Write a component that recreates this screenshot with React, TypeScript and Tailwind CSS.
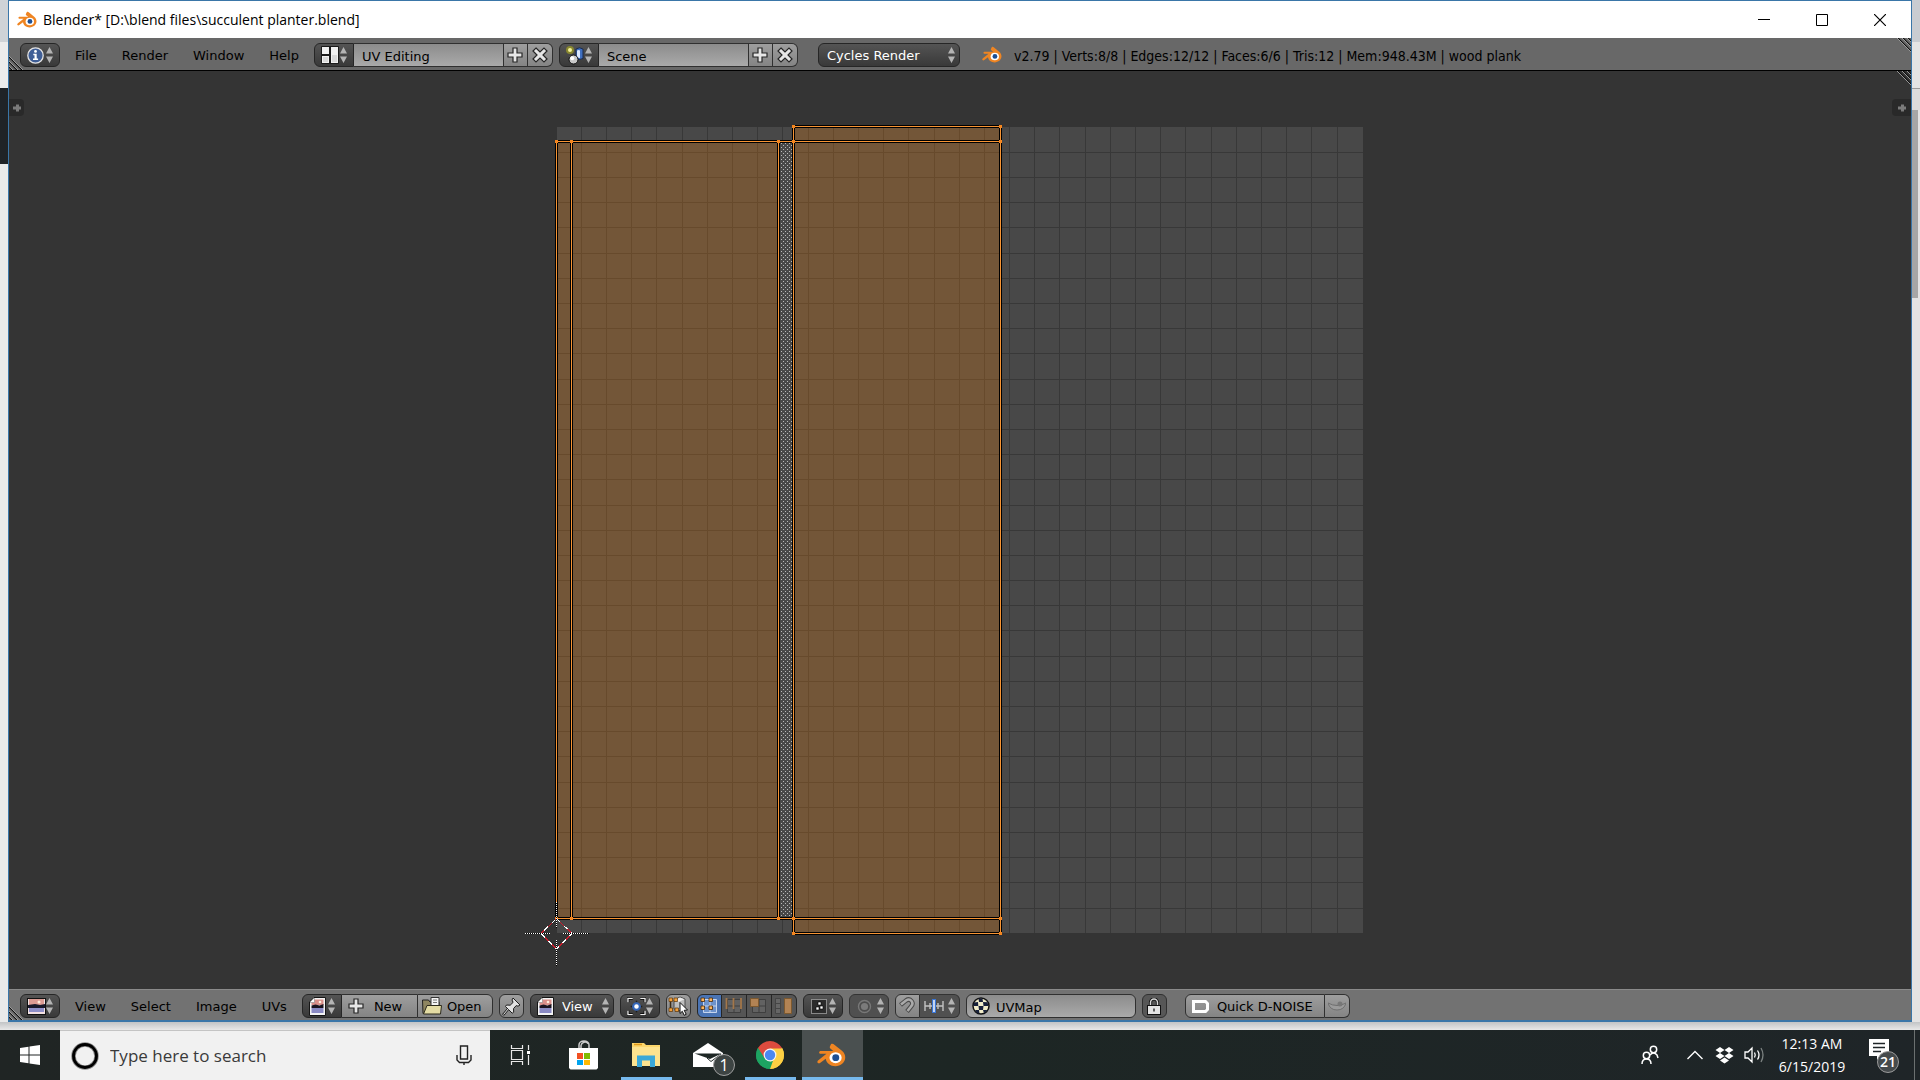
import type { ReactNode } from "react";
import clsx from "clsx";

const DARK = "border-[#262626] bg-linear-to-b from-[#545454] to-[#393939] text-white";
const LIGHT = "border-[#303030] bg-linear-to-b from-[#9e9e9e] to-[#848484] text-black";
const FIELD = "border-[#303030] bg-linear-to-b from-[#8c8c8c] to-[#aaaaaa] text-black";

function Arrows() {
  return (
    <svg width="7" height="16" viewBox="0 0 7 16" className="shrink-0" aria-hidden="true">
      <path d="M3.5 0 L7 6.5 H0 Z M3.5 16 L0 9.5 H7 Z" fill="#b4b4b4" />
    </svg>
  );
}

function BlenderLogo({ size }: { size: number }) {
  return (
    <svg width={size} height={size} viewBox="0 0 30 26" aria-hidden="true">
      <path
        d="M14.6 1.2c.9-.8 2.2-.4 3 .3l8.2 6.7c2.4 2 3.5 4.500 3.400 7.200-.2 5-4.700 8.700-10.200 8.700-5.200 0-9.400-3.300-10-7.700L3.500 20.500c-1 .8-2.300.7-2.800 0-.7-.9-.2-2 .7-2.700l8.400-6.500H4c-1.100 0-1.800-.6-1.800-1.500s.8-1.500 1.900-1.500h12.700l-3-2.600c-1-.9-.7-1.800.8-4.500z"
        fill="#ef8522"
      />
      <ellipse cx="19.200" cy="15.300" rx="6.300" ry="5.700" fill="#fff" />
      <circle cx="19.400" cy="15.200" r="3.600" fill="#1d4f93" />
    </svg>
  );
}

function InfoIcon() {
  return (
    <svg width="17" height="17" viewBox="0 0 17 17" aria-hidden="true">
      <circle cx="8.500" cy="8.500" r="7.700" fill="#3f5e96" stroke="#e4e4e4" strokeWidth="1.300" />
      <circle cx="8.500" cy="4.400" r="1.400" fill="#fff" />
      <path d="M6.300 6.800h3.400v4.700h1.400v1.500H6v-1.500h1.500V8.300H6.300z" fill="#fff" />
    </svg>
  );
}

function LayoutIcon() {
  return (
    <svg width="18" height="18" viewBox="0 0 18 18" aria-hidden="true">
      <rect x="0" y="0" width="18" height="18" rx="1" fill="#1c1c1c" />
      <path d="M1 1h7v7H1z M1 10h7v7H1z M10 1h7v16h-7z" fill="#f2f2f2" />
      <path d="M2 11h5v5H2z M11 9h5v7h-5z" fill="#dadada" />
    </svg>
  );
}

function SceneIcon() {
  return (
    <svg width="19" height="19" viewBox="0 0 19 19" aria-hidden="true">
      <circle cx="4" cy="4" r="4" fill="#87862f" />
      <circle cx="4" cy="4" r="2" fill="#f6f49c" />
      <path d="M10 3q3.500-2.500 7 0v9.500q-3.500 2-7 0z" fill="#3f6fc0" stroke="#1b2a4a" />
      <path d="M11 4.500q2-1.200 3 0v7.500l-3-.5z" fill="#dbe8ff" />
      <circle cx="7.500" cy="13.500" r="4.500" fill="#c9c9c9" stroke="#111" />
      <circle cx="6.200" cy="12.200" r="2" fill="#fff" />
    </svg>
  );
}

function PlusIcon() {
  return (
    <svg width="16" height="16" viewBox="0 0 16 16" className="shrink-0" aria-hidden="true">
      <path d="M6 1h4v5h5v4h-5v5H6v-5H1V6h5z" fill="#e6e6e6" stroke="#262626" strokeWidth="1.200" />
    </svg>
  );
}

function CrossIcon() {
  return (
    <svg width="16" height="16" viewBox="0 0 16 16" className="shrink-0" aria-hidden="true">
      <path
        d="M4 1 L8 5 L12 1 L15 4 L11 8 L15 12 L12 15 L8 11 L4 15 L1 12 L5 8 L1 4 Z"
        fill="#e6e6e6"
        stroke="#262626"
        strokeWidth="1.200"
      />
    </svg>
  );
}

function PictureIcon() {
  return (
    <svg width="19" height="17" viewBox="0 0 19 17" aria-hidden="true">
      <rect width="19" height="17" fill="#111" />
      <rect x="1" y="1" width="17" height="15" fill="#f0e2e2" />
      <rect x="2" y="1" width="15" height="6" fill="#dd9c94" />
      <circle cx="12" cy="4" r="1.500" fill="#ffe9d8" />
      <path d="M1 7l7-1 5 1 5-1v4H1z" fill="#191a2c" />
      <rect x="2" y="10" width="15" height="4" fill="#8f8fc8" />
      <path d="M2 14.500h15" stroke="#f6dfe0" />
    </svg>
  );
}

function ImageFileIcon() {
  return (
    <svg width="17" height="19" viewBox="0 0 17 19" aria-hidden="true">
      <path d="M5 .5h11.500v18H.5V5z" fill="#f4f4f4" stroke="#161616" />
      <path d="M5.500 2.500h9V8h-12V5.500z" fill="#d98f8a" />
      <circle cx="11" cy="5" r="1.300" fill="#ffeede" />
      <path d="M2.500 8.500l4-1 4 1 4-1.500v4h-12z" fill="#1a1420" />
      <path d="M2.500 11h12v5h-12z" fill="#8a8ac4" />
      <path d="M1 5.500h4.500V1" fill="#fff" stroke="#888" strokeWidth=".6" />
    </svg>
  );
}

function FolderIcon() {
  return (
    <svg width="20" height="18" viewBox="0 0 20 18" className="shrink-0" aria-hidden="true">
      <path d="M.5 3h6l1.500 2h9v11.500H1z" fill="#8f8660" stroke="#222" />
      <path d="M9 .5h8v10H9z" fill="#f5f5f5" stroke="#333" />
      <path d="M11 3h4M11 5.500h4" stroke="#777" />
      <path d="M5 8.500h14.500l-1 8.500H1.500z" fill="#e4dca4" stroke="#2c2a1c" />
    </svg>
  );
}

function PinIcon() {
  return (
    <svg width="19" height="19" viewBox="0 0 19 19" aria-hidden="true">
      <path d="M1 18l6-7" stroke="#1d1d1d" strokeWidth="2.500" />
      <path
        d="M11 1l7 7-2 1.200-1.800-.6-2.700 3 .2 3.600-1.500 1L3.500 9.500l1-1.500 3.700.2 2.900-2.800L10 3z"
        fill="#e2e2e2"
        stroke="#1d1d1d"
      />
      <path d="M1.500 17.500l5-6" stroke="#f2f2f2" />
    </svg>
  );
}

function PivotIcon() {
  return (
    <svg width="20" height="19" viewBox="0 0 20 19" aria-hidden="true">
      <path d="M1 5V1h5M14 1h5v4M19 14v4h-5M6 18H1v-4" fill="none" stroke="#000" strokeWidth="3" />
      <path d="M1 5V1h5M14 1h5v4M19 14v4h-5M6 18H1v-4" fill="none" stroke="#eee" strokeWidth="1.400" />
      <circle cx="10" cy="9.500" r="3.500" fill="#fff" stroke="#3265b8" strokeWidth="2.200" />
      <path d="M10 3.500v1M10 14.500v1M4 9.500h1M15 9.500h1" stroke="#111" strokeWidth="1.500" />
    </svg>
  );
}

function SyncIcon() {
  return (
    <svg width="21" height="20" viewBox="0 0 21 20" aria-hidden="true">
      <path d="M2.500 3.500v10" fill="none" stroke="#3b2b18" strokeWidth="1.500" />
      <path d="M6 4l6-3 5 2v9l-6 3-5-2z" fill="#bdbdbd" stroke="#4a4a4a" />
      <path d="M6.500 4l4.500 1.800 5.500-2.600L12 1.500z" fill="#ececec" />
      <path
        d="M1 2h3.500v3.500H1zM6 2h3.500v3.500H6zM1 12h3.500v3.500H1zM7 12h3.500v3.500H7z"
        fill="#f2a13c"
        stroke="#5b3309"
        strokeWidth=".7"
      />
      <path d="M12 6.500l7.500 7.500-3.300.3 2 4-2 1-1.900-4L12 17.500z" fill="#fff" stroke="#111" />
    </svg>
  );
}

function UvModeIcon({ mode }: { mode: string }) {
  const active = mode === "Vertex";
  return (
    <svg width="19" height="18" viewBox="0 0 19 18" aria-hidden="true">
      {mode !== "Island" && (
        <g stroke={active ? "#c6d5ee" : "#3f3f3f"} fill={active ? "#6d93cc" : "#626262"}>
          <path d="M3.500 2.500h13v13h-13z" />
          <path d="M10 2.500v13M3.500 9h13" />
        </g>
      )}
      {active && (
        <path
          d="M1 1h3.500v3.500H1zM9 1h3.500v3.500H9zM1 9h3.500v3.500H1zM9 9h3.500v3.500H9z"
          fill="#ffb75e"
          stroke="#4a2a08"
          strokeWidth=".8"
        />
      )}
      {mode === "Edge" && <path d="M2.500 1v11M9.500 1v11M17 1v11" stroke="#a3774a" strokeWidth="1.800" />}
      {mode === "Face" && <path d="M1.500 1.500h8v8h-8z" fill="#b28354" stroke="#7d592f" />}
      {mode === "Island" && (
        <>
          <path d="M1.500 1.500h5v15h-5zM1.500 6.500h5M1.500 11.500h5" fill="#666" stroke="#454545" />
          <path d="M10.500 1.500h7v15h-7z" fill="#b28354" stroke="#7d592f" />
        </>
      )}
    </svg>
  );
}

function StickyIcon() {
  return (
    <svg width="18" height="17" viewBox="0 0 18 17" aria-hidden="true">
      <rect x="1.500" y="1.500" width="15" height="14" fill="#2b2b2b" stroke="#ddd" strokeDasharray="1 1" />
      <path d="M8 4h3v3H8zM6 9h3v3H6zM10 8h3v3h-3z" fill="#fff" stroke="#000" strokeWidth=".6" />
    </svg>
  );
}

function ProportionalIcon() {
  return (
    <svg width="15" height="15" viewBox="0 0 15 15" aria-hidden="true">
      <circle cx="7.500" cy="7.500" r="6" fill="#4d4d4d" stroke="#787878" strokeWidth="1.400" />
      <circle cx="7.500" cy="7.500" r="3.600" fill="#7b7b7b" />
    </svg>
  );
}

function MagnetIcon() {
  return (
    <svg width="18" height="18" viewBox="0 0 18 18" aria-hidden="true">
      <path d="M2.500 8l5.500-4.500c4.500-3 8.500 2.500 5 6L9 14.500" fill="none" stroke="#4a4a4a" strokeWidth="4.600" />
      <path d="M3 7.600l5-4.100c4.500-3 8.500 2.500 5 6L9.500 14" fill="none" stroke="#a9a9a9" strokeWidth="2.600" />
    </svg>
  );
}

function IncrementIcon() {
  return (
    <svg width="20" height="14" viewBox="0 0 20 14" aria-hidden="true">
      <path d="M1 2v10M6 4v6M14 4v6M19 2v10M1 7h18" stroke="#c2c2c2" strokeWidth="1.400" />
      <path d="M10 0v14" stroke="#3a76d6" strokeWidth="4" />
      <path d="M10 1v12" stroke="#fff" strokeWidth="1.400" />
    </svg>
  );
}

function CheckerBallIcon() {
  return (
    <svg width="18" height="18" viewBox="0 0 18 18" className="shrink-0" aria-hidden="true">
      <circle cx="9" cy="9" r="8" fill="#f1ecc9" stroke="#111" strokeWidth="1.500" />
      <path
        d="M6.500 1.500h4L11 5H7zM2 5.500l4-.5.300 4H1.500zM11 5l4.500.3L16.500 9H11.500zM6.500 9h5l-.5 4H7zM3 13l4 0 .5 3.500L5 16zM11 13h4.500L12 16.500z"
        fill="#17203a"
      />
    </svg>
  );
}

function LockIcon() {
  return (
    <svg width="14" height="17" viewBox="0 0 14 17" aria-hidden="true">
      <path d="M3.500 8V4.500a3.500 3.500 0 0 1 7 0V8" fill="none" stroke="#111" strokeWidth="3.200" />
      <path d="M3.500 8V4.500a3.500 3.500 0 0 1 7 0V8" fill="none" stroke="#d8d8d8" strokeWidth="1.500" />
      <rect x=".5" y="7.500" width="13" height="9" fill="#e4e4e4" stroke="#111" />
      <path d="M7 10.500v3" stroke="#333" strokeWidth="1.500" />
    </svg>
  );
}

function CornerGrip({ className, flip }: { className: string; flip?: boolean }) {
  return (
    <svg width="14" height="14" viewBox="0 0 14 14" className={clsx("absolute", className)} aria-hidden="true">
      <g transform={flip ? "rotate(180 7 7)" : undefined}>
        <path d="M1 0l13 13M6 0l8 8M11 0l3 3" stroke="#111" strokeWidth="1.200" />
        <path d="M0 0l14 14M5 0l9 9M10 0l4 4" stroke="#a5a5a5" strokeWidth=".9" />
      </g>
    </svg>
  );
}

function IconMenu({ label, children, className }: { label: string; children: ReactNode; className?: string }) {
  return (
    <button
      type="button"
      aria-label={label}
      aria-haspopup="menu"
      className={clsx("flex h-6 w-10 items-center justify-between border px-1.5", DARK, className ?? "rounded-md")}
    >
      {children}
      <Arrows />
    </button>
  );
}

function IconButton({ label, className, children }: { label: string; className: string; children: ReactNode }) {
  return (
    <button
      type="button"
      aria-label={label}
      className={clsx("flex h-6 w-[25px] items-center justify-center border", className)}
    >
      {children}
    </button>
  );
}

function Menus({ items }: { items: string[] }) {
  return (
    <nav className="mx-[3px] flex gap-px">
      {items.map((item) => (
        <button key={item} type="button" className="h-6 px-3 pt-0.5 text-black">
          {item}
        </button>
      ))}
    </nav>
  );
}

function DataBlock({ label, value, icon }: { label: string; value: string; icon: ReactNode }) {
  return (
    <div className="flex">
      <IconMenu label={`Browse ${label}`} className="rounded-l-md">
        {icon}
      </IconMenu>
      <input
        aria-label={label}
        defaultValue={value}
        className={clsx("h-6 w-[149px] border-y px-2 pt-0.5 outline-none", FIELD)}
      />
      <IconButton label={`Add ${label}`} className={clsx(LIGHT)}>
        <PlusIcon />
      </IconButton>
      <IconButton label={`Remove ${label}`} className={clsx("rounded-r-md border-l-0", LIGHT)}>
        <CrossIcon />
      </IconButton>
    </div>
  );
}

function DropDown({
  label,
  options,
  className,
  icon,
}: {
  label: string;
  options: string[];
  className: string;
  icon?: ReactNode;
}) {
  return (
    <div className={clsx("relative flex h-6 items-center rounded-md border", DARK, className)}>
      {icon}
      <select aria-label={label} className="h-full flex-1 appearance-none bg-transparent pt-0.5 pl-2 outline-none">
        {options.map((o) => (
          <option key={o}>{o}</option>
        ))}
      </select>
      <span className="pointer-events-none absolute right-1">
        <Arrows />
      </span>
    </div>
  );
}

function TitleBar() {
  return (
    <div className="flex h-[37px] items-center bg-white pl-2">
      <BlenderLogo size={20} />
      <h1 className="ml-1.5 flex-1 font-['Open_Sans','Noto_Sans',sans-serif] text-[14px] text-black">
        Blender* [D:\blend files\succulent planter.blend]
      </h1>
      <div className="flex pr-0.5">
        <button type="button" aria-label="Minimize" className="flex h-9 w-[58px] items-center justify-center">
          <svg width="12" height="12" viewBox="0 0 12 12">
            <path d="M0 5.500h12" stroke="#000" />
          </svg>
        </button>
        <button type="button" aria-label="Maximize" className="flex h-9 w-[58px] items-center justify-center">
          <svg width="12" height="12" viewBox="0 0 12 12">
            <path d="M.5.5h11v11H.5z" fill="none" stroke="#000" />
          </svg>
        </button>
        <button type="button" aria-label="Close" className="flex h-9 w-[58px] items-center justify-center">
          <svg width="12" height="12" viewBox="0 0 12 12">
            <path d="M0 0l12 12M12 0L0 12" stroke="#000" strokeWidth="1.200" />
          </svg>
        </button>
      </div>
    </div>
  );
}

function InfoHeader() {
  return (
    <header className="relative flex h-[33px] items-center border-b border-black bg-[#686868] pt-0.5 pl-[11px]">
      <CornerGrip className="bottom-0 left-0" flip />
      <CornerGrip className="top-0 right-0" />
      <IconMenu label="Editor type">
        <InfoIcon />
      </IconMenu>
      <Menus items={["File", "Render", "Window", "Help"]} />
      <div className="flex items-center gap-1.5">
        <DataBlock label="Screen" value="UV Editing" icon={<LayoutIcon />} />
        <DataBlock label="Scene" value="Scene" icon={<SceneIcon />} />
      </div>
      <DropDown
        label="Render engine"
        options={["Cycles Render", "Blender Render", "Blender Game"]}
        className="ml-5 w-[142px]"
      />
      <div className="ml-[22px] flex items-center gap-3 whitespace-nowrap text-black">
        <BlenderLogo size={20} />
        <span className="pt-0.5 font-['DejaVu_Sans_Condensed','DejaVu_Sans',sans-serif] text-[14px]">
          v2.79 | Verts:8/8 | Edges:12/12 | Faces:6/6 | Tris:12 | Mem:948.43M | wood plank
        </span>
      </div>
    </header>
  );
}

// Canvas coordinates: the 0..1 UV square is 806 units wide, origin at its top left.
const SIZE = 806;
const STEP = SIZE / 32;
const gridLines = Array.from({ length: 31 }, (_, i) => Math.floor((i + 1) * STEP + 0.2));

const faces = [
  { x: -0.5, y: 14.5, w: 15, h: 777 },
  { x: 14.5, y: 14.5, w: 207, h: 777 },
  { x: 236.5, y: 14.5, w: 207, h: 777 },
  { x: 236.5, y: -0.5, w: 207, h: 15 },
  { x: 236.5, y: 791.5, w: 207, h: 15 },
];

const edges =
  "M-.5 14.5H443.5M-.5 791.5H443.5M236.5 -.5H443.5M236.5 806.5H443.5" +
  "M-.5 14.5V791.5M14.5 14.5V791.5M221.5 14.5V791.5M236.5 -.5V806.5M443.5 -.5V806.5";

const vertices = [
  [-0.5, 14.5],
  [14.5, 14.5],
  [221.5, 14.5],
  [236.5, 14.5],
  [443.5, 14.5],
  [236.5, -0.5],
  [443.5, -0.5],
  [-0.5, 791.5],
  [14.5, 791.5],
  [221.5, 791.5],
  [236.5, 791.5],
  [443.5, 791.5],
  [236.5, 806.5],
  [443.5, 806.5],
];

function UvCanvas() {
  return (
    <svg
      width={SIZE}
      height={SIZE}
      viewBox={`0 0 ${SIZE} ${SIZE}`}
      className="shrink-0 overflow-visible"
      role="img"
      aria-label="UV layout"
      shapeRendering="crispEdges"
    >
      <defs>
        <pattern id="stipple" width="4" height="4" patternUnits="userSpaceOnUse">
          <path d="M0 0h1v1H0zM2 2h1v1H2z" fill="#b9b9b9" />
        </pattern>
      </defs>
      <rect width={SIZE} height={SIZE} fill="#484848" />
      {gridLines.map((p) => (
        <path key={p} d={`M${p - 0.5} 0V${SIZE}M0 ${p + 0.5}H${SIZE}`} stroke="#383838" />
      ))}
      {faces.map((f, i) => (
        <rect key={i} x={f.x} y={f.y} width={f.w} height={f.h} fill="#ff870a" fillOpacity="0.24" />
      ))}
      <rect x="223" y="16" width="13" height="775" fill="#484848" />
      <rect x="224" y="16" width="12" height="775" fill="url(#stipple)" />
      <path d={edges} fill="none" stroke="#000" strokeWidth="3" />
      <path d={edges} fill="none" stroke="#f79433" />
      {vertices.map(([x, y]) => (
        <rect key={`${x},${y}`} x={x - 1.5} y={y - 1.5} width="3" height="3" fill="#f5861f" />
      ))}
      <g fill="none">
        <path d="M-.5 791.5L15 806.500L-.5 822L-16 806.500Z" stroke="#c81e2d" />
        <path d="M-.5 791.5L15 806.500L-.5 822L-16 806.500Z" stroke="#fff" strokeDasharray="5 5" />
        <path d="M-32 806.500H-7M6 806.500H32M-.5 775V801M-.5 813V839" stroke="#000" />
        <path d="M-32 806.500H-7M6 806.500H32M-.5 775V801M-.5 813V839" stroke="#fff" strokeDasharray="1 1" />
      </g>
    </svg>
  );
}

function RegionTab({ className, label }: { className: string; label: string }) {
  return (
    <button
      type="button"
      aria-label={label}
      className={clsx("absolute top-7 flex h-[17px] items-center justify-center bg-[#292929]", className)}
    >
      <svg width="8" height="8" viewBox="0 0 8 8">
        <path d="M3 .5h3v2h2v3H6v2H3v-2H0v-3h3z" fill="#7a7a7a" />
      </svg>
    </button>
  );
}

function ImageHeader() {
  return (
    <footer className="relative flex h-[31px] items-start border-t border-[#8a8a8a] bg-[#727272] pt-1 pl-[11px]">
      <CornerGrip className="bottom-0 left-0" flip />
      <IconMenu label="Editor type">
        <PictureIcon />
      </IconMenu>
      <Menus items={["View", "Select", "Image", "UVs"]} />
      <div className="flex gap-1.5">
        <div className="flex">
          <IconMenu label="Browse image" className="rounded-l-md">
            <ImageFileIcon />
          </IconMenu>
          <button type="button" className={clsx("flex h-6 w-[75px] items-center gap-2.5 border-y px-1.5", LIGHT)}>
            <PlusIcon />
            <span className="pt-0.5">New</span>
          </button>
          <button
            type="button"
            className={clsx("flex h-6 w-[76px] items-center gap-[5px] rounded-r-md border px-1", LIGHT)}
          >
            <FolderIcon />
            <span className="pt-0.5">Open</span>
          </button>
        </div>
        <IconButton label="Pin" className={clsx("rounded-md", LIGHT)}>
          <PinIcon />
        </IconButton>
        <DropDown label="Mode" options={["View", "Paint", "Mask"]} className="w-[84px] pl-1.5" icon={<ImageFileIcon />} />
        <IconMenu label="Pivot point">
          <PivotIcon />
        </IconMenu>
        <IconButton label="Keep UV and edit mode mesh selection in sync" className={clsx("rounded-md", LIGHT)}>
          <SyncIcon />
        </IconButton>
        <div className="flex" role="group" aria-label="UV selection mode">
          {["Vertex", "Edge", "Face", "Island"].map((mode) => (
            <button
              key={mode}
              type="button"
              aria-label={mode}
              aria-pressed={mode === "Vertex"}
              className={clsx(
                "flex h-6 w-[25px] items-center justify-center border border-[#262626]",
                mode === "Vertex" ? "rounded-l-md bg-[#4a74b4]" : "border-l-0 bg-[#555555]",
                mode === "Island" && "rounded-r-md",
              )}
            >
              <UvModeIcon mode={mode} />
            </button>
          ))}
        </div>
        <IconMenu label="Sticky selection mode">
          <StickyIcon />
        </IconMenu>
        <button
          type="button"
          aria-label="Proportional editing"
          className="flex h-6 w-10 items-center justify-between rounded-md border border-[#333333] bg-[#505050] pr-1 pl-[7px]"
        >
          <ProportionalIcon />
          <Arrows />
        </button>
        <div className="flex">
          <IconButton label="Snap" className={clsx("rounded-l-md", LIGHT)}>
            <MagnetIcon />
          </IconButton>
          <button
            type="button"
            aria-label="Snap element"
            className="flex h-6 w-10 items-center justify-between rounded-r-md border border-l-0 border-[#333333] bg-[#505050] px-1"
          >
            <IncrementIcon />
            <Arrows />
          </button>
        </div>
        <label className={clsx("flex h-6 w-[170px] items-center gap-1.5 rounded-md border px-[5px]", FIELD)}>
          <CheckerBallIcon />
          <input
            aria-label="Active UV map"
            defaultValue="UVMap"
            className="h-full w-full min-w-0 bg-transparent pt-0.5 outline-none"
          />
        </label>
        <IconButton label="Update automatically" className="rounded-md border-[#303030] bg-[#575757]">
          <LockIcon />
        </IconButton>
        <div className="ml-3 flex">
          <button
            type="button"
            className={clsx("flex h-6 w-[140px] items-center gap-2 rounded-l-md border px-1.5 whitespace-nowrap", LIGHT)}
          >
            <svg width="17" height="13" viewBox="0 0 17 13" className="shrink-0" aria-hidden="true">
              <path d="M1.500 1.500h12l2 2v6l-2 2h-12z" fill="none" stroke="#fff" strokeWidth="3" />
            </svg>
            <span className="pt-0.5">Quick D-NOISE</span>
          </button>
          <IconButton label="Preview" className={clsx("rounded-r-md border-l-0", LIGHT)}>
            <svg width="18" height="12" viewBox="0 0 18 12">
              <path d="M0 3q9 5 18 0q-2 7-9 7T0 3z" fill="#9b9b9b" stroke="#6f6f6f" />
              <circle cx="12" cy="4" r="2.500" fill="#777" />
            </svg>
          </IconButton>
        </div>
      </div>
    </footer>
  );
}

function TaskButton({ label, open, active, children }: { label: string; open?: boolean; active?: boolean; children: ReactNode }) {
  return (
    <button
      type="button"
      aria-label={label}
      className={clsx("relative flex w-[61px] items-center justify-center pr-0.5", active && "bg-[#4a5050]")}
    >
      {children}
      {open && (
        <span className={clsx("absolute bottom-0 h-[3px] bg-[#76b9ed]", active ? "inset-x-0" : "inset-x-[5px]")} />
      )}
    </button>
  );
}

function Taskbar() {
  return (
    <div className="flex h-[50px] shrink-0 bg-linear-to-r from-[#202524] via-[#1d2624] to-[#1f2528] font-['Open_Sans','Noto_Sans',sans-serif]">
      <button type="button" aria-label="Start" className="flex w-[60px] items-center justify-center">
        <svg width="20" height="20" viewBox="0 0 20 20">
          <path d="M0 3l8.500-1.200V9.500H0zM9.500 1.600L20 0v9.500H9.500zM0 10.500h8.500v7.700L0 17zM9.500 10.500H20V20L9.500 18.400z" fill="#fff" />
        </svg>
      </button>
      <div className="flex w-[430px] items-center border-t border-[#c4c4c4] bg-[#f1f1f1] pr-[18px] pl-[11px]">
        <svg width="28" height="28" viewBox="0 0 28 28" className="shrink-0" aria-hidden="true">
          <circle cx="14" cy="14" r="11.500" fill="none" stroke="#8b8b8b" strokeWidth="4.500" />
          <circle cx="14" cy="14" r="11.500" fill="none" stroke="#000" strokeWidth="2.800" />
        </svg>
        <input
          type="text"
          aria-label="Search"
          placeholder="Type here to search"
          className="ml-[11px] min-w-0 flex-1 bg-transparent text-[17px] outline-none placeholder:text-[#3a3a3a]"
        />
        <button type="button" aria-label="Voice search">
          <svg width="16" height="21" viewBox="0 0 16 21">
            <path d="M4.500 1h7v13h-7z" fill="none" stroke="#222" strokeWidth="1.400" />
            <path d="M1 10v5l2.500 2.500h9L15 15v-5M8 17.500V20" fill="none" stroke="#222" strokeWidth="1.400" />
          </svg>
        </button>
      </div>
      <button type="button" aria-label="Task view" className="flex w-[60px] items-center justify-center">
        <svg width="21" height="20" viewBox="0 0 21 20">
          <path
            d="M1.500 0v3.500h11V0M1.500 20v-3.500h11V20M1.500 5.500h11v9h-11zM18.500 0v5M18.500 10v10"
            fill="none"
            stroke="#e8e8e8"
            strokeWidth="1.200"
          />
          <path d="M17 6h3v3h-3z" fill="#fff" />
        </svg>
      </button>
      <div className="ml-1 flex gap-px">
        <TaskButton label="Microsoft Store">
          <svg width="30" height="30" viewBox="0 0 30 30">
            <path d="M10 8V5a5 4 0 0 1 10 0v3M12 8V5.500a4 4 0 0 1 7-2" fill="none" stroke="#ccc" strokeWidth="1.500" />
            <path d="M0 8h29v20l-1.500 1.500h-26L0 28z" fill="#fff" />
            <path d="M8 13h6v6H8z" fill="#f25022" />
            <path d="M15 13h6v6h-6z" fill="#7fba00" />
            <path d="M8 20h6v5H8z" fill="#00a4ef" />
            <path d="M15 20h6v5h-6z" fill="#ffb900" />
          </svg>
        </TaskButton>
        <TaskButton label="File Explorer" open>
          <svg width="28" height="24" viewBox="0 0 28 24">
            <path d="M0 0h12l2 2h14v20H0z" fill="#fbd66c" />
            <path d="M0 4h28v19H0z" fill="#fde38f" />
            <path d="M2 1.500h8" stroke="#e29b1c" strokeWidth="1.500" />
            <path d="M5 12.500h18V24h-5v-6.500h-8V24H5z" fill="#3ba8d8" />
          </svg>
        </TaskButton>
        <TaskButton label="Mail, 1 new">
          <svg width="30" height="26" viewBox="0 0 30 26">
            <path d="M0 11L15 1l15 10v14H0z" fill="#fff" />
            <path d="M1.500 11.500h27L17 17z" fill="#1d2624" />
            <path d="M14 16l4 3.500L28 12" fill="none" stroke="#1d2624" />
          </svg>
          <span className="absolute right-1 bottom-1 flex size-[22px] items-center justify-center rounded-full border border-[#a0a0a0] bg-[#3d4443] text-[16px] leading-none text-white">
            1
          </span>
        </TaskButton>
        <TaskButton label="Google Chrome" open>
          <svg width="28" height="28" viewBox="0 0 28 28">
            <path d="M14 14L1.900 7A14 14 0 0 1 26.100 7z" fill="#dd4b3e" />
            <path d="M14 14L26.100 7A14 14 0 0 1 14 28z" fill="#fdd043" />
            <path d="M14 14L14 28A14 14 0 0 1 1.900 7z" fill="#1da462" />
            <path d="M14 7.500H26.400A14 14 0 0 1 14 28L19.600 17.200z" fill="#fdd043" />
            <path d="M1.900 7L8.400 17.200L14 14V7.500z" fill="#dd4b3e" />
            <path d="M1.900 7L8.400 17.200A6.500 6.500 0 0 0 17 19.800L14 28A14 14 0 0 1 1.900 7z" fill="#1da462" />
            <circle cx="14" cy="14" r="6.400" fill="#f5f5f5" />
            <circle cx="14" cy="14" r="5.200" fill="#4b88f0" />
          </svg>
        </TaskButton>
        <TaskButton label="Blender" open active>
          <BlenderLogo size={29} />
        </TaskButton>
      </div>
      <div className="ml-auto flex items-center text-white">
        <button type="button" aria-label="People" className="mr-7">
          <svg width="18" height="20" viewBox="0 0 18 20" fill="none" stroke="#fff" strokeWidth="1.500">
            <circle cx="12.500" cy="4.500" r="3.200" />
            <path d="M9 10q3.500-4 7 0l1 3" />
            <circle cx="5.500" cy="10.500" r="3.200" />
            <path d="M1 19q0-5 4.500-5t4.500 5" />
          </svg>
        </button>
        <button type="button" aria-label="Show hidden icons" className="mr-3">
          <svg width="16" height="10" viewBox="0 0 16 10">
            <path d="M.5 9L8 1.500 15.500 9" fill="none" stroke="#fff" strokeWidth="1.400" />
          </svg>
        </button>
        <button type="button" aria-label="Dropbox" className="mr-2.5">
          <svg width="19" height="17" viewBox="0 0 19 17">
            <path
              d="M5 0l4.500 3L5 6 .5 3zM14 0l4.500 3L14 6 9.500 3zM5 6l4.500 3L5 12 .5 9zM14 6l4.500 3L14 12 9.500 9zM9.500 10.500l4.500 3-4.500 3-4.500-3z"
              fill="#fff"
            />
          </svg>
        </button>
        <button type="button" aria-label="Volume" className="mr-3">
          <svg width="21" height="18" viewBox="0 0 21 18" fill="none" stroke="#fff" strokeWidth="1.300">
            <path d="M1 6h3l4-4v14l-4-4H1zM10.500 6.500q1.500 2.500 0 5M13.500 4.500q3 4.500 0 9" />
            <path d="M17 2q4 7 0 14" stroke="#7c8281" />
          </svg>
        </button>
        <time dateTime="2019-06-15T00:13" className="w-[70px] text-center text-[14px] leading-[23px]">
          12:13 AM
          <br />
          6/15/2019
        </time>
        <button type="button" aria-label="21 notifications" className="relative mr-[17px] ml-[18px] h-8 w-8">
          <svg width="21" height="21" viewBox="0 0 21 21" className="absolute top-0 left-1">
            <path d="M0 0h20v17h-8l-4 4v-4H0z" fill="#fff" />
            <path d="M4 4.500h12M4 8.500h12M4 12.500h8" stroke="#1f2528" strokeWidth="1.400" />
          </svg>
          <span className="absolute top-3 left-3 flex size-[22px] items-center justify-center rounded-full border border-[#9a9a9a] bg-[#454a4c] text-[14px] leading-none font-semibold">
            21
          </span>
        </button>
        <span className="mr-[5px] h-full w-px bg-[#6b7070]" />
      </div>
    </div>
  );
}

export default function App() {
  return (
    <div className="flex h-screen flex-col overflow-hidden bg-[#e8e8e8] font-['DejaVu_Sans',sans-serif] text-[13px] leading-5">
      <div className="flex min-h-0 flex-1">
        <div className="flex w-2 flex-col bg-[#e9eaea]">
          <div className="h-[42px] bg-[#cfd3d7]" />
          <div className="h-[46px] bg-[#ececec]" />
          <div className="h-[76px] bg-[#1f2327]" />
        </div>
        <main className="flex min-w-0 flex-1 flex-col border border-b-2 border-[#3a76a8] bg-[#343434]">
          <TitleBar />
          <InfoHeader />
          <section className="relative flex min-h-0 flex-1 items-center justify-center">
            <CornerGrip className="top-0 right-0" />
            <RegionTab label="Show tools" className="left-0 w-[15px] rounded-r-sm" />
            <RegionTab label="Show properties" className="right-0 w-[19px] rounded-l-sm" />
            <UvCanvas />
          </section>
          <ImageHeader />
        </main>
        <div className="flex w-2 flex-col bg-[#e3e3e3]">
          <div className="h-[42px] bg-[#c9ccd1]" />
          <div className="h-[46px] bg-[#e4e4e4]" />
          <div className="h-[22px] border-t border-[#9a9a9a] bg-[#dcdcdc]" />
          <div className="mr-0.5 h-[188px] bg-[#a6a6a6]" />
        </div>
      </div>
      <div className="h-2 shrink-0 bg-linear-to-b from-[#c2c4c6] to-[#e8e8e8]" />
      <Taskbar />
    </div>
  );
}
